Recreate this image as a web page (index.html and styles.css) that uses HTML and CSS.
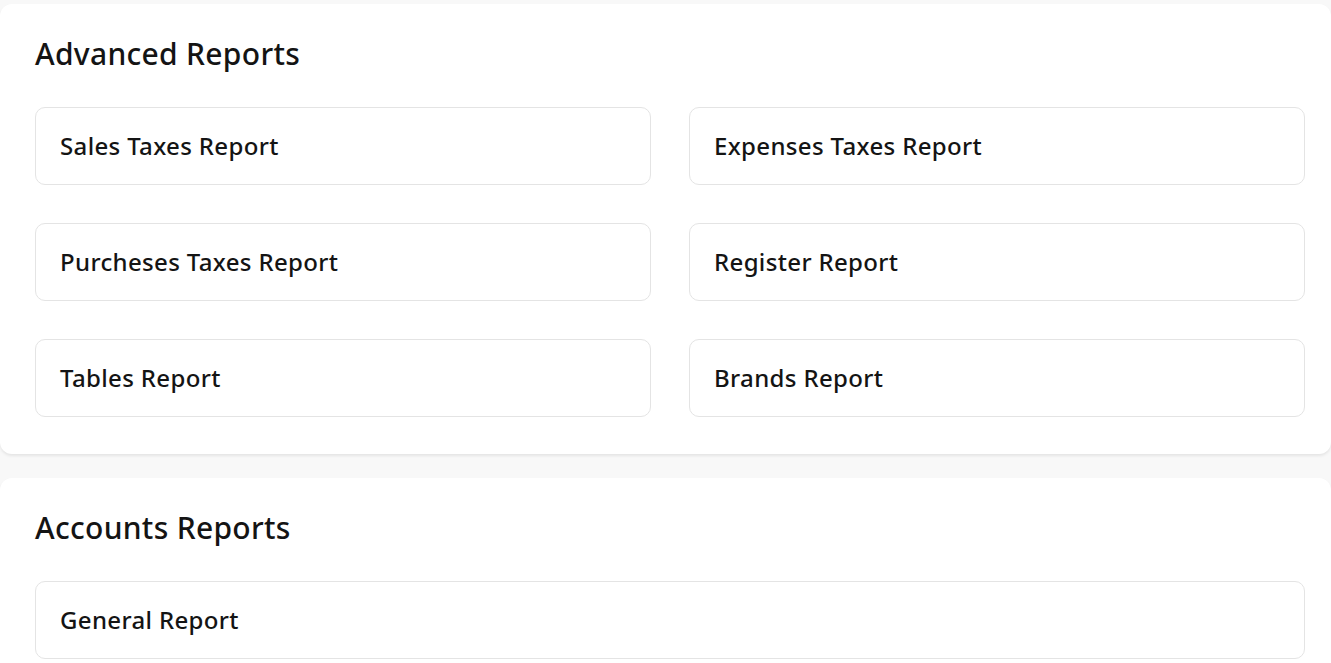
FILE: index.html
```html
<!DOCTYPE html>
<html>
<head>
<meta charset="utf-8">
<link rel="stylesheet" href="styles.css">
</head>
<body>
<div class="page">
  <section class="card">
    <h2 class="title">Advanced Reports</h2>
    <div class="grid">
      <a class="item">Sales Taxes Report</a>
      <a class="item">Expenses Taxes Report</a>
      <a class="item">Purcheses Taxes Report</a>
      <a class="item">Register Report</a>
      <a class="item">Tables Report</a>
      <a class="item">Brands Report</a>
    </div>
  </section>
  <section class="card">
    <h2 class="title">Accounts Reports</h2>
    <div class="grid single">
      <a class="item">General Report</a>
    </div>
  </section>
</div>
</body>
</html>
```
FILE: styles.css
```css
html, body {
  margin: 0;
  padding: 0;
  background: #f8f8f8;
  overflow: hidden;
}
body {
  font-family: "Noto Sans", "Open Sans", sans-serif;
  color: #141414;
}
.page {
  display: flex;
  flex-direction: column;
  gap: 24px;
  padding-top: 4px;
}
.card {
  background: #fff;
  border-radius: 12px;
  box-shadow: 0 2px 3px rgba(0,0,0,0.08);
  padding: 32px 26px 37px 35px;
}
.title {
  margin: 0 0 35px;
  font-size: 30px;
  font-weight: 500;
  line-height: 36px;
  letter-spacing: 0.3px;
}
.grid {
  display: grid;
  grid-template-columns: 1fr 1fr;
  gap: 38px;
}
.grid.single {
  grid-template-columns: 1fr;
}
.item {
  display: flex;
  align-items: center;
  height: 78px;
  box-sizing: border-box;
  border: 1px solid #e4e4e4;
  border-radius: 10px;
  padding: 0 24px 2px;
  font-size: 24px;
  font-weight: 500;
  letter-spacing: 0.35px;
  color: #141414;
}
```
